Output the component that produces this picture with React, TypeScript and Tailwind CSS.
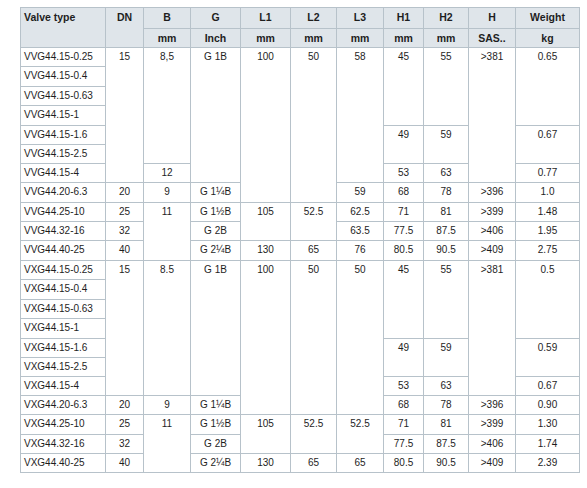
import React from "react";

type Cell = [string, number?];

const spanCls: Record<number, string> = {
  1: "",
  2: "row-span-2",
  3: "row-span-3",
  4: "row-span-4",
  6: "row-span-6",
  7: "row-span-7",
  8: "row-span-8",
};

const rows: Cell[][] = [
  [["VVG44.15-0.25"], ["15", 7], ["8,5", 6], ["G 1B", 7], ["100", 8], ["50", 8], ["58", 7], ["45", 4], ["55", 4], [">381", 7], ["0.65", 4]],
  [["VVG44.15-0.4"]],
  [["VVG44.15-0.63"]],
  [["VVG44.15-1"]],
  [["VVG44.15-1.6"], ["49", 2], ["59", 2], ["0.67", 2]],
  [["VVG44.15-2.5"]],
  [["VVG44.15-4"], ["12"], ["53"], ["63"], ["0.77"]],
  [["VVG44.20-6.3"], ["20"], ["9"], ["G 1¼B"], ["59"], ["68"], ["78"], [">396"], ["1.0"]],
  [["VVG44.25-10"], ["25"], ["11", 3], ["G 1½B"], ["105", 2], ["52.5", 2], ["62.5"], ["71"], ["81"], [">399"], ["1.48"]],
  [["VVG44.32-16"], ["32"], ["G 2B"], ["63.5"], ["77.5"], ["87.5"], [">406"], ["1.95"]],
  [["VVG44.40-25"], ["40"], ["G 2¼B"], ["130"], ["65"], ["76"], ["80.5"], ["90.5"], [">409"], ["2.75"]],
  [["VXG44.15-0.25"], ["15", 7], ["8.5", 7], ["G 1B", 7], ["100", 8], ["50", 8], ["50", 8], ["45", 4], ["55", 4], [">381", 7], ["0.5", 4]],
  [["VXG44.15-0.4"]],
  [["VXG44.15-0.63"]],
  [["VXG44.15-1"]],
  [["VXG44.15-1.6"], ["49", 2], ["59", 2], ["0.59", 2]],
  [["VXG44.15-2.5"]],
  [["VXG44.15-4"], ["53"], ["63"], ["0.67"]],
  [["VXG44.20-6.3"], ["20"], ["9"], ["G 1¼B"], ["68"], ["78"], [">396"], ["0.90"]],
  [["VXG44.25-10"], ["25"], ["11", 3], ["G 1½B"], ["105", 2], ["52.5", 2], ["52.5", 2], ["71"], ["81"], [">399"], ["1.30"]],
  [["VXG44.32-16"], ["32"], ["G 2B"], ["77.5"], ["87.5"], [">406"], ["1.74"]],
  [["VXG44.40-25"], ["40"], ["G 2¼B"], ["130"], ["65"], ["65"], ["80.5"], ["90.5"], [">409"], ["2.39"]],
];

const head1 = ["B", "G", "L1", "L2", "L3", "H1", "H2", "H", "Weight"];
const head2 = ["mm", "Inch", "mm", "mm", "mm", "mm", "mm", "SAS..", "kg"];

export default function App() {
  return (
    <div
      className="w-[587px] h-[488px] bg-white pl-[20px] pt-[7px] text-[#1e1e1e]"
      style={{ fontFamily: '"Liberation Sans", Arial, sans-serif' }}
    >
      <div className="grid w-fit gap-px p-px bg-[#b7c2ca] grid-cols-[84px_37px_46px_49px_49px_45px_46px_39px_44px_46px_63px] grid-rows-[20px_18px_18px_19px_18px_19px_18px_18px_18px_19px_18px_18px_19px_18px_19px_18px_19px_18px_18px_18px_18px_19px_18px_18px]">
        <div className="row-span-2 bg-[#dfe5ea] pl-[3px] pt-[3px] text-[10.5px] leading-[12px] font-bold">Valve type</div>
        <div className="row-span-2 bg-[#dfe5ea] pt-[3px] text-center text-[10.5px] leading-[12px] font-bold">DN</div>
        {head1.map((h, i) => (
          <div key={"h1" + i} className="bg-[#dfe5ea] pt-[3px] text-center text-[10.5px] leading-[12px] font-bold">
            {h}
          </div>
        ))}
        {head2.map((h, i) => (
          <div key={"h2" + i} className="bg-[#dfe5ea] pt-[3px] text-center text-[10.5px] leading-[12px] font-bold">
            {h}
          </div>
        ))}
        {rows.map((r, ri) =>
          r.map((c, ci) => {
            const span = c[1] ?? 1;
            const first = ci === 0;
            return (
              <div
                key={ri + "-" + ci}
                className={
                  "bg-white pt-[3px] text-[10px] leading-[12px] whitespace-nowrap " +
                  (first ? "pl-[3px] text-left " : "text-center ") +
                  spanCls[span]
                }
              >
                {c[0]}
              </div>
            );
          })
        )}
      </div>
    </div>
  );
}
